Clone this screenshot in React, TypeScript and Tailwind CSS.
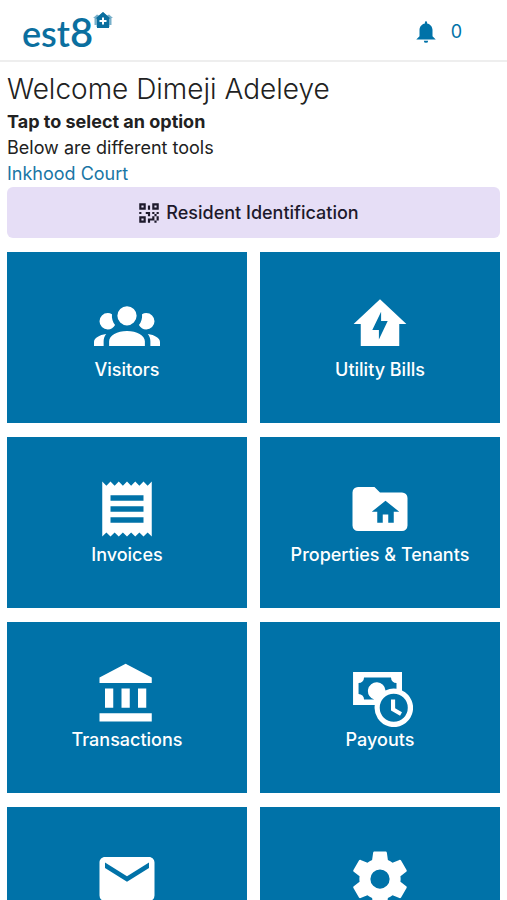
const tiles = [
  {
    label: "Visitors",
    path: "M12,5.5A3.5,3.5 0 0,1 15.5,9A3.5,3.5 0 0,1 12,12.5A3.5,3.5 0 0,1 8.5,9A3.5,3.5 0 0,1 12,5.5M5,8C5.56,8 6.08,8.15 6.53,8.42C6.38,9.85 6.8,11.27 7.66,12.38C7.16,13.34 6.16,14 5,14A3,3 0 0,1 2,11A3,3 0 0,1 5,8M19,8A3,3 0 0,1 22,11A3,3 0 0,1 19,14C17.84,14 16.84,13.34 16.34,12.38C17.2,11.27 17.62,9.85 17.47,8.42C17.92,8.15 18.44,8 19,8M5.5,18.25C5.5,16.18 8.41,14.5 12,14.5C15.59,14.5 18.5,16.18 18.5,18.25V20H5.5V18.25M0,20V18.5C0,17.11 1.89,15.94 4.45,15.6C3.86,16.28 3.5,17.22 3.5,18.25V20H0M24,20H20.5V18.25C20.5,17.22 20.14,16.28 19.55,15.6C22.11,15.94 24,17.11 24,18.5V20Z",
  },
  {
    label: "Utility Bills",
    path: "M12 3L2.4 12H5V20H19V12H21.6L12 3M11.6 17.6V14.2H9.2L12.4 7.5V10.9H14.8L11.6 17.6Z",
  },
  {
    label: "Invoices",
    path: "M3,22L4.5,20.5L6,22L7.5,20.5L9,22L10.5,20.5L12,22L13.5,20.5L15,22L16.5,20.5L18,22L19.5,20.5L21,22V2L19.5,3.5L18,2L16.5,3.5L15,2L13.5,3.5L12,2L10.5,3.5L9,2L7.5,3.5L6,2L4.5,3.5L3,2M18,9H6V7H18M18,13H6V11H18M18,17H6V15H18V17Z",
  },
  {
    label: "Properties & Tenants",
    path: "M20 6H12L10 4H4A2 2 0 0 0 2 6V18A2 2 0 0 0 4 20H20A2 2 0 0 0 22 18V8A2 2 0 0 0 20 6M17 13V17H15V14H13V17H11V13H9L14 9L19 13Z",
  },
  {
    label: "Transactions",
    path: "M11.5,1L2,6V8H21V6M16,10V17H19V10M2,22H21V19H2M10,10V17H13V10M4,10V17H7V10H4Z",
  },
  {
    label: "Payouts",
    path: "M2.2 4H20V10.7A7 7 0 1 1 10.1 16H2.2V4M6.2 6A2 2 0 0 1 4.2 8V12A2 2 0 0 1 6.2 14H9.9A3.2 3.2 0 1 1 14 10.7A7 7 0 0 1 18 10.1V8A2 2 0 0 1 16 6H6.2M17 11.9A5.1 5.1 0 1 0 17 22.1A5.1 5.1 0 1 0 17 11.9M16 14H17.5V17.2L20 18.6L19.3 19.9L16 18V14Z",
  },
  {
    label: "Messages",
    path: "M20,8L12,13L4,8V6L12,11L20,6M20,4H4C2.89,4 2,4.89 2,6V18A2,2 0 0,0 4,20H20A2,2 0 0,0 22,18V6C22,4.89 21.1,4 20,4Z",
  },
  {
    label: "Settings",
    path: "M12,15.5A3.5,3.5 0 0,1 8.5,12A3.5,3.5 0 0,1 12,8.5A3.5,3.5 0 0,1 15.5,12A3.5,3.5 0 0,1 12,15.5M19.43,12.97C19.47,12.65 19.5,12.33 19.5,12C19.5,11.67 19.47,11.34 19.43,11L21.54,9.37C21.73,9.22 21.78,8.95 21.66,8.73L19.66,5.27C19.54,5.05 19.27,4.96 19.05,5.05L16.56,6.05C16.04,5.66 15.5,5.32 14.87,5.07L14.5,2.42C14.46,2.18 14.25,2 14,2H10C9.75,2 9.54,2.18 9.5,2.42L9.13,5.07C8.5,5.32 7.96,5.66 7.44,6.05L4.95,5.05C4.73,4.96 4.46,5.05 4.34,5.27L2.34,8.73C2.21,8.95 2.27,9.22 2.46,9.37L4.57,11C4.53,11.34 4.5,11.67 4.5,12C4.5,12.33 4.53,12.65 4.57,12.97L2.46,14.63C2.27,14.78 2.21,15.05 2.34,15.27L4.34,18.73C4.46,18.95 4.73,19.03 4.95,18.95L7.44,17.94C7.96,18.34 8.5,18.68 9.13,18.93L9.5,21.58C9.54,21.82 9.75,22 10,22H14C14.25,22 14.46,21.82 14.5,21.58L14.87,18.93C15.5,18.67 16.04,18.34 16.56,17.94L19.05,18.95C19.27,19.03 19.54,18.95 19.66,18.73L21.66,15.27C21.78,15.05 21.73,14.78 21.54,14.63L19.43,12.97Z",
  },
]

const bellPath =
  "M14,20A2,2 0 0,1 12,22A2,2 0 0,1 10,20H14M12,2A1,1 0 0,1 13,3V4.08C15.84,4.56 18,7.03 18,10V16L21,19H3L6,16V10C6,7.03 8.16,4.56 11,4.08V3A1,1 0 0,1 12,2Z"

const qrPath =
  "M3,11H5V13H3V11M11,5H13V9H11V5M9,11H13V15H11V13H9V11M15,11H17V13H19V11H21V13H19V15H21V19H19V21H17V19H13V21H11V17H15V15H17V13H15V11M19,19V15H17V19H19M15,3H21V9H15V3M17,5V7H19V5H17M3,3H9V9H3V3M5,5V7H7V5H5M3,15H9V21H3V15M5,17V19H7V17H5Z"

function Icon({ path, className }: { path: string; className: string }) {
  return (
    <svg viewBox="0 0 24 24" fill="currentColor" fillRule="evenodd" aria-hidden="true" className={className}>
      <path d={path} />
    </svg>
  )
}

function Logo() {
  return (
    <a href="#" className="flex items-start text-[#0b6f9f]">
      <span className="flex items-baseline font-['Lato',sans-serif] font-semibold leading-10">
        <span className="text-[36px]">est</span>
        <span className="text-[40px]">8</span>
      </span>
      <svg viewBox="0 0 20 16" aria-hidden="true" className="w-5 h-4">
        <path
          d="M0 6L4 2.5L6 3.5L10 0L14 3.5L16 2.5L20 6H18.5V13H16.5V15H3.5V13H1.5V6Z"
          fill="currentColor"
          opacity="0.55"
        />
        <path d="M10 0L2.5 6.5H4V16H16V6.5H17.5Z" fill="currentColor" />
        <path d="M9 5.5H11V8H13.5V10H11V12.5H9V10H6.5V8H9Z" fill="white" />
      </svg>
    </a>
  )
}

export default function App() {
  return (
    <div className="bg-white text-[#212121] font-['Inter',sans-serif] text-lg leading-[26px]">
      <header className="flex items-center justify-between h-[62px] pl-[22px] pr-[45px] pt-1 border-b-2 border-[#eeeeee]">
        <Logo />
        <button type="button" aria-label="Notifications" className="flex items-center gap-3 text-[#0072a8]">
          <Icon path={bellPath} className="w-[26px] h-[26px]" />
          <span>0</span>
        </button>
      </header>

      <main className="px-[7px] pt-[7px] pb-4">
        <h1 className="text-[28px] leading-10 font-light">Welcome Dimeji Adeleye</h1>
        <p className="font-bold">Tap to select an option</p>
        <p>Below are different tools</p>
        <a href="#" className="block text-[#1976a5]">
          Inkhood Court
        </a>

        <button
          type="button"
          className="flex w-full h-[51px] items-center justify-center gap-1 rounded-md bg-[#e6def6] pr-3 font-medium text-[#1d192b]"
        >
          <Icon path={qrPath} className="w-[26px] h-[26px]" />
          Resident Identification
        </button>

        <div className="grid grid-cols-2 gap-x-[13px] gap-y-[14px] mt-[14px]">
          {tiles.map((tile) => (
            <button
              key={tile.label}
              type="button"
              className="flex h-[171px] flex-col items-center justify-center bg-[#0072a8] pb-0.5 font-medium text-white"
            >
              <Icon path={tile.path} className="w-[66px] h-[66px]" />
              {tile.label}
            </button>
          ))}
        </div>
      </main>
    </div>
  )
}
